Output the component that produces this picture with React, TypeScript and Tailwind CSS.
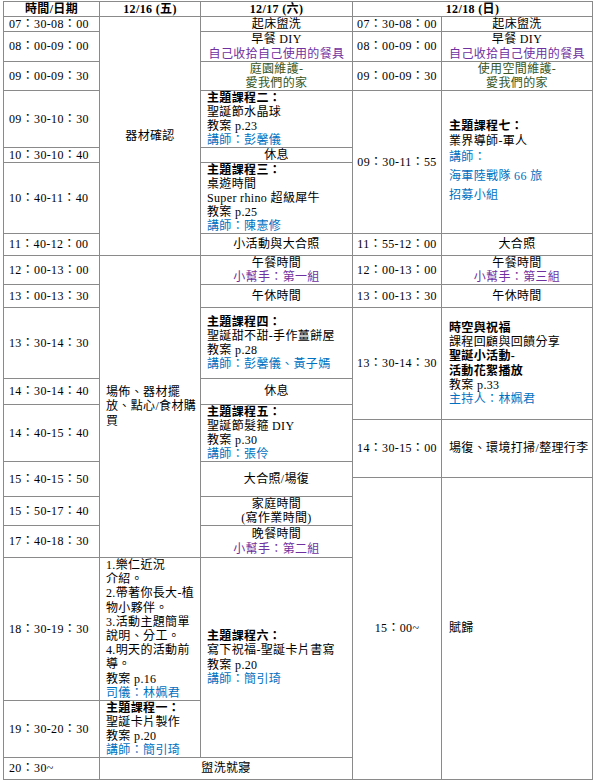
import React from "react";

const purple = "text-[#7030a0]";
const green = "text-[#375623]";
const blue = "text-[#0070c0]";

type CellProps = {
  className: string;
  children?: React.ReactNode;
};

// one box of the timetable, vertically centred like the Word table
const Cell: React.FC<CellProps> = ({ className, children }) => (
  <div className={"bg-white flex flex-col justify-center " + className}>
    {children}
  </div>
);

const Time: React.FC<CellProps> = ({ className, children }) => (
  <Cell className={"items-start pl-[5px] " + className}>
    <div>{children}</div>
  </Cell>
);

const Title: React.FC<{ children: React.ReactNode }> = ({ children }) => (
  <div className="font-bold">{children}</div>
);

const Schedule: React.FC = () => {
  return (
    <div className="min-h-[781px] bg-white pt-px pl-[3px]">
      <div className="grid w-[590px] grid-cols-[95px_100px_151px_88px_150px] grid-rows-[14px_14px_29px_28px_56px_14px_70px_21px_28px_22px_70px_25px_14px_41px_15px_18px_28px_31px_142px_56px_21px] gap-px bg-[#8a8a8a] p-px font-['Liberation_Serif','Noto_Sans_CJK_TC',serif] text-[12px] leading-[14.2px] tracking-[0.35px] whitespace-nowrap text-black">
        {/* header */}
        <Cell className="col-start-1 row-start-1 items-center font-bold">時間/日期</Cell>
        <Cell className="col-start-2 row-start-1 items-center font-bold">12/16 (五)</Cell>
        <Cell className="col-start-3 row-start-1 items-center font-bold">12/17 (六)</Cell>
        <Cell className="col-start-4 col-span-2 row-start-1 items-center font-bold">12/18 (日)</Cell>

        {/* time column */}
        <Time className="col-start-1 row-start-2">07：30-08：00</Time>
        <Time className="col-start-1 row-start-3">08：00-09：00</Time>
        <Time className="col-start-1 row-start-4">09：00-09：30</Time>
        <Time className="col-start-1 row-start-5">09：30-10：30</Time>
        <Time className="col-start-1 row-start-6">10：30-10：40</Time>
        <Time className="col-start-1 row-start-7">10：40-11：40</Time>
        <Time className="col-start-1 row-start-8">11：40-12：00</Time>
        <Time className="col-start-1 row-start-9">12：00-13：00</Time>
        <Time className="col-start-1 row-start-10">13：00-13：30</Time>
        <Time className="col-start-1 row-start-11">13：30-14：30</Time>
        <Time className="col-start-1 row-start-12">14：30-14：40</Time>
        <Time className="col-start-1 row-start-13 row-span-2">14：40-15：40</Time>
        <Time className="col-start-1 row-start-15 row-span-2">15：40-15：50</Time>
        <Time className="col-start-1 row-start-17">15：50-17：40</Time>
        <Time className="col-start-1 row-start-18">17：40-18：30</Time>
        <Time className="col-start-1 row-start-19">18：30-19：30</Time>
        <Time className="col-start-1 row-start-20">19：30-20：30</Time>
        <Time className="col-start-1 row-start-21">20：30~</Time>

        {/* 12/16 */}
        <Cell className="col-start-2 row-start-2 row-span-7 items-center">器材確認</Cell>
        <Cell className="col-start-2 row-start-9 row-span-10 items-start pl-[6px]">
          <div>場佈、器材擺</div>
          <div>放、點心/食材購</div>
          <div>買</div>
        </Cell>
        <Cell className="col-start-2 row-start-19 items-start pl-[6px]">
          <div>1.樂仁近況</div>
          <div>介紹。</div>
          <div>2.帶著你長大-植</div>
          <div>物小夥伴。</div>
          <div>3.活動主題簡單</div>
          <div>說明、分工。</div>
          <div>4.明天的活動前</div>
          <div>導。</div>
          <div>教案 p.16</div>
          <div className={blue}>司儀：林姵君</div>
        </Cell>
        <Cell className="col-start-2 row-start-20 items-start pl-[6px]">
          <Title>主題課程一：</Title>
          <div>聖誕卡片製作</div>
          <div>教案 p.20</div>
          <div className={blue}>講師：簡引琦</div>
        </Cell>
        <Cell className="col-start-2 col-span-2 row-start-21 items-center">盥洗就寢</Cell>

        {/* 12/17 */}
        <Cell className="col-start-3 row-start-2 items-center">起床盥洗</Cell>
        <Cell className="col-start-3 row-start-3 items-center text-center">
          <div>早餐 DIY</div>
          <div className={purple}>自己收拾自己使用的餐具</div>
        </Cell>
        <Cell className={"col-start-3 row-start-4 items-center text-center " + green}>
          <div>庭園維護-</div>
          <div>愛我們的家</div>
        </Cell>
        <Cell className="col-start-3 row-start-5 items-start pl-[6px]">
          <Title>主題課程二：</Title>
          <div>聖誕節水晶球</div>
          <div>教案 p.23</div>
          <div className={blue}>講師：彭馨儀</div>
        </Cell>
        <Cell className="col-start-3 row-start-6 items-center">休息</Cell>
        <Cell className="col-start-3 row-start-7 items-start pl-[6px]">
          <Title>主題課程三：</Title>
          <div>桌遊時間</div>
          <div>Super rhino 超級犀牛</div>
          <div>教案 p.25</div>
          <div className={blue}>講師：陳憲修</div>
        </Cell>
        <Cell className="col-start-3 row-start-8 items-center">小活動與大合照</Cell>
        <Cell className="col-start-3 row-start-9 items-center text-center">
          <div>午餐時間</div>
          <div className={purple}>小幫手：第一組</div>
        </Cell>
        <Cell className="col-start-3 row-start-10 items-center">午休時間</Cell>
        <Cell className="col-start-3 row-start-11 items-start pl-[6px]">
          <Title>主題課程四：</Title>
          <div>聖誕甜不甜-手作薑餅屋</div>
          <div>教案 p.28</div>
          <div className={blue}>講師：彭馨儀、黃子嫣</div>
        </Cell>
        <Cell className="col-start-3 row-start-12 items-center">休息</Cell>
        <Cell className="col-start-3 row-start-13 row-span-2 items-start pl-[6px]">
          <Title>主題課程五：</Title>
          <div>聖誕節髮箍 DIY</div>
          <div>教案 p.30</div>
          <div className={blue}>講師：張伶</div>
        </Cell>
        <Cell className="col-start-3 row-start-15 row-span-2 items-center">大合照/場復</Cell>
        <Cell className="col-start-3 row-start-17 items-center text-center">
          <div>家庭時間</div>
          <div>(寫作業時間)</div>
        </Cell>
        <Cell className="col-start-3 row-start-18 items-center text-center">
          <div>晚餐時間</div>
          <div className={purple}>小幫手：第二組</div>
        </Cell>
        <Cell className="col-start-3 row-start-19 row-span-2 items-start pl-[6px]">
          <Title>主題課程六：</Title>
          <div>寫下祝福-聖誕卡片書寫</div>
          <div>教案 p.20</div>
          <div className={blue}>講師：簡引琦</div>
        </Cell>

        {/* 12/18 times */}
        <Cell className="col-start-4 row-start-2 items-center">07：30-08：00</Cell>
        <Cell className="col-start-4 row-start-3 items-center">08：00-09：00</Cell>
        <Cell className="col-start-4 row-start-4 items-center">09：00-09：30</Cell>
        <Cell className="col-start-4 row-start-5 row-span-3 items-center">09：30-11：55</Cell>
        <Cell className="col-start-4 row-start-8 items-center">11：55-12：00</Cell>
        <Cell className="col-start-4 row-start-9 items-center">12：00-13：00</Cell>
        <Cell className="col-start-4 row-start-10 items-center">13：00-13：30</Cell>
        <Cell className="col-start-4 row-start-11 row-span-3 items-center">13：30-14：30</Cell>
        <Cell className="col-start-4 row-start-14 row-span-2 items-center">14：30-15：00</Cell>
        <Cell className="col-start-4 row-start-16 row-span-6 items-center">15：00~</Cell>

        {/* 12/18 activities */}
        <Cell className="col-start-5 row-start-2 items-center">起床盥洗</Cell>
        <Cell className="col-start-5 row-start-3 items-center text-center">
          <div>早餐 DIY</div>
          <div className={purple}>自己收拾自己使用的餐具</div>
        </Cell>
        <Cell className={"col-start-5 row-start-4 items-center text-center " + green}>
          <div>使用空間維護-</div>
          <div>愛我們的家</div>
        </Cell>
        <Cell className="col-start-5 row-start-5 row-span-3 items-start pl-[7px]">
          <Title>主題課程七：</Title>
          <div>業界導師-軍人</div>
          <div className={"leading-[19px] " + blue}>講師：</div>
          <div className={"leading-[19px] " + blue}>海軍陸戰隊 66 旅</div>
          <div className={"leading-[19px] " + blue}>招募小組</div>
        </Cell>
        <Cell className="col-start-5 row-start-8 items-center">大合照</Cell>
        <Cell className="col-start-5 row-start-9 items-center text-center">
          <div>午餐時間</div>
          <div className={purple}>小幫手：第三組</div>
        </Cell>
        <Cell className="col-start-5 row-start-10 items-center">午休時間</Cell>
        <Cell className="col-start-5 row-start-11 row-span-3 items-start pl-[7px]">
          <Title>時空與祝福</Title>
          <div>課程回顧與回饋分享</div>
          <Title>聖誕小活動-</Title>
          <Title>活動花絮播放</Title>
          <div>教案 p.33</div>
          <div className={blue}>主持人：林姵君</div>
        </Cell>
        <Cell className="col-start-5 row-start-14 row-span-2 items-start pl-[7px]">
          場復、環境打掃/整理行李
        </Cell>
        <Cell className="col-start-5 row-start-16 row-span-6 items-start pl-[7px]">賦歸</Cell>
      </div>
    </div>
  );
};

export default function App() {
  return <Schedule />;
}
